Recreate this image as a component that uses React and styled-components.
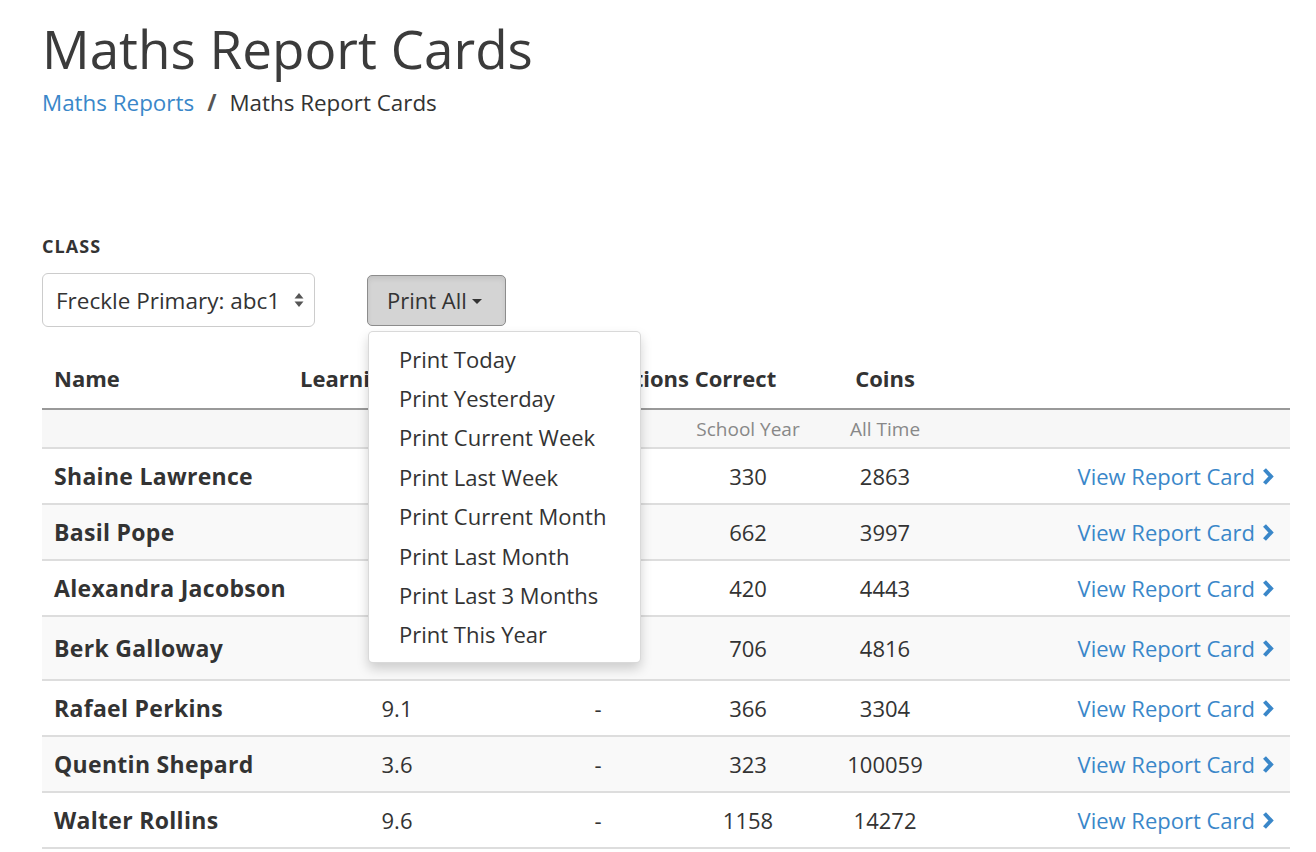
import styled, { createGlobalStyle } from 'styled-components';

const STUDENTS = [
    { name: 'Shaine Lawrence', level: '', recent: '', year: 330, coins: 2863 },
    { name: 'Basil Pope', level: '', recent: '', year: 662, coins: 3997 },
    { name: 'Alexandra Jacobson', level: '', recent: '', year: 420, coins: 4443 },
    { name: 'Berk Galloway', level: '', recent: '', year: 706, coins: 4816, tall: true },
    { name: 'Rafael Perkins', level: '9.1', recent: '-', year: 366, coins: 3304 },
    { name: 'Quentin Shepard', level: '3.6', recent: '-', year: 323, coins: 100059 },
    { name: 'Walter Rollins', level: '9.6', recent: '-', year: 1158, coins: 14272 }
];

const PRINT_OPTIONS = [
    'Print Today',
    'Print Yesterday',
    'Print Current Week',
    'Print Last Week',
    'Print Current Month',
    'Print Last Month',
    'Print Last 3 Months',
    'Print This Year'
];

const GlobalStyle = createGlobalStyle`
    * {
        box-sizing: border-box;
    }

    body {
        margin: 0;
        background: #fff;
        color: #333;
        font-family: 'Open Sans', 'Liberation Sans', sans-serif;
    }
`;

function SelectArrows() {
    return (
        <svg width="10" height="16" viewBox="0 0 10 16">
            <path d="M5 1 L9.5 6.5 H0.5 Z" fill="#555" />
            <path d="M5 15 L9.5 9.5 H0.5 Z" fill="#555" />
        </svg>
    );
}

function Chevron() {
    return (
        <svg width="14" height="19" viewBox="0 0 14 19">
            <path
                d="M3.5 2.5 L10 9.5 L3.5 16.5"
                fill="none"
                stroke="#3a87c9"
                strokeWidth="4"
                strokeLinejoin="miter"
            />
        </svg>
    );
}

function App() {
    return (
        <Page>
            <GlobalStyle />
            <Title>Maths Report Cards</Title>
            <Breadcrumb>
                <CrumbLink href="#">Maths Reports</CrumbLink>
                <CrumbDivider>/</CrumbDivider>
                <span>Maths Report Cards</span>
            </Breadcrumb>

            <FilterLabel>Class</FilterLabel>
            <Toolbar>
                <ClassSelect>
                    <span>Freckle Primary: abc1</span>
                    <SelectArrows />
                </ClassSelect>
                <PrintWrapper>
                    <PrintButton>
                        Print All
                        <Caret />
                    </PrintButton>
                    <PrintMenu>
                        {PRINT_OPTIONS.map((option) => (
                            <PrintItem key={option}>{option}</PrintItem>
                        ))}
                    </PrintMenu>
                </PrintWrapper>
            </Toolbar>

            <Table>
                <colgroup>
                    <col style={{ width: 248 }} />
                    <col style={{ width: 214 }} />
                    <col style={{ width: 188 }} />
                    <col style={{ width: 112 }} />
                    <col style={{ width: 162 }} />
                    <col style={{ width: 324 }} />
                </colgroup>
                <thead>
                    <HeadRow>
                        <HeadCell align="left">Name</HeadCell>
                        <HeadCell align="left" indent={10}>
                            Learning Level
                        </HeadCell>
                        <HeadCell colSpan={2} indent={46}>
                            Questions Correct
                        </HeadCell>
                        <HeadCell>Coins</HeadCell>
                        <HeadCell />
                    </HeadRow>
                    <SubHeadRow>
                        <SubHeadCell />
                        <SubHeadCell />
                        <SubHeadCell>Today</SubHeadCell>
                        <SubHeadCell>School Year</SubHeadCell>
                        <SubHeadCell>All Time</SubHeadCell>
                        <SubHeadCell />
                    </SubHeadRow>
                </thead>
                <tbody>
                    {STUDENTS.map((student, index) => (
                        <BodyRow
                            key={student.name}
                            $striped={index % 2 === 1}
                            $tall={student.tall}
                        >
                            <NameCell>{student.name}</NameCell>
                            <Cell>{student.level}</Cell>
                            <Cell>{student.recent}</Cell>
                            <Cell>{student.year}</Cell>
                            <Cell>{student.coins}</Cell>
                            <LinkCell>
                                <ReportLink href="#">
                                    View Report Card
                                    <Chevron />
                                </ReportLink>
                            </LinkCell>
                        </BodyRow>
                    ))}
                </tbody>
            </Table>
        </Page>
    );
}

export default App;

const Page = styled.div`
    padding: 14px 26px 0 42px;
`;

const Title = styled.h1`
    margin: 0;
    font-family: 'Open Sans', sans-serif;
    font-weight: 400;
    font-size: 53px;
    line-height: 70px;
    color: #3b3b3b;
`;

const Breadcrumb = styled.div`
    display: flex;
    align-items: center;
    gap: 13px;
    margin-top: 4px;
    font-size: 22.4px;
    line-height: 30px;
    color: #333;
`;

const CrumbLink = styled.a`
    color: #3a87c9;
    text-decoration: none;
`;

const CrumbDivider = styled.span`
    font-weight: 700;
    color: #555;
`;

const FilterLabel = styled.div`
    margin-top: 117px;
    font-size: 18px;
    font-weight: 700;
    letter-spacing: 1.1px;
    text-transform: uppercase;
    color: #333;
    line-height: 23px;
`;

const Toolbar = styled.div`
    display: flex;
    align-items: center;
    gap: 52px;
    margin-top: 15px;
`;

const ClassSelect = styled.div`
    width: 273px;
    height: 54px;
    display: flex;
    align-items: center;
    justify-content: space-between;
    padding: 0 10px 0 13px;
    border: 1px solid #ccc;
    border-radius: 6px;
    font-size: 22.5px;
    color: #333;
`;

const PrintWrapper = styled.div`
    position: relative;
`;

const PrintButton = styled.button`
    display: flex;
    align-items: center;
    gap: 5px;
    width: 139px;
    height: 51px;
    padding: 0 0 0 19px;
    background: #d4d4d4;
    border: 1px solid #8c8c8c;
    border-radius: 5px;
    box-shadow: inset 0 3px 5px rgba(0, 0, 0, 0.08);
    font-family: inherit;
    font-size: 22px;
    color: #333;
`;

const Caret = styled.span`
    display: inline-block;
    margin-top: 3px;
    border-top: 5px solid #333;
    border-left: 5px solid transparent;
    border-right: 5px solid transparent;
`;

const PrintMenu = styled.ul`
    position: absolute;
    top: 56px;
    left: 1px;
    z-index: 10;
    width: 273px;
    margin: 0;
    padding: 8px 0 7px;
    list-style: none;
    background: #fff;
    border: 1px solid rgba(0, 0, 0, 0.15);
    border-radius: 5px;
    box-shadow: 0 6px 12px rgba(0, 0, 0, 0.175);
`;

const PrintItem = styled.li`
    padding: 0 30px;
    font-size: 22px;
    line-height: 39.4px;
    color: #333;
    white-space: nowrap;
`;

const Table = styled.table`
    width: 1248px;
    margin-top: 20px;
    border-collapse: collapse;
    table-layout: fixed;
    font-size: 22px;
`;

const HeadRow = styled.tr`
    height: 62px;
    border-bottom: 2px solid #999;
`;

const HeadCell = styled.th`
    padding: 0;
    padding-left: ${({ align, indent }) =>
        indent ? `${indent}px` : align === 'left' ? '12px' : '0'};
    text-align: ${({ align }) => align || 'center'};
    font-weight: 700;
    color: #333;
    white-space: nowrap;
    vertical-align: middle;
`;

const SubHeadRow = styled.tr`
    height: 39px;
    background: #f7f7f7;
    border-bottom: 2px solid #ddd;
`;

const SubHeadCell = styled.td`
    text-align: center;
    font-size: 19px;
    color: #888;
`;

const BodyRow = styled.tr`
    height: ${({ $tall }) => ($tall ? '64px' : '56px')};
    background: ${({ $striped }) => ($striped ? '#f9f9f9' : '#fff')};
    border-bottom: 2px solid #ddd;
`;

const Cell = styled.td`
    text-align: center;
    color: #333;
    vertical-align: middle;
`;

const NameCell = styled(Cell)`
    padding-left: 12px;
    text-align: left;
    font-size: 23px;
    font-weight: 700;
    letter-spacing: 0.3px;
    white-space: nowrap;
`;

const LinkCell = styled(Cell)`
    padding-right: 15px;
    text-align: right;
`;

const ReportLink = styled.a`
    display: inline-flex;
    align-items: center;
    gap: 6px;
    color: #3a87c9;
    text-decoration: none;
`;
